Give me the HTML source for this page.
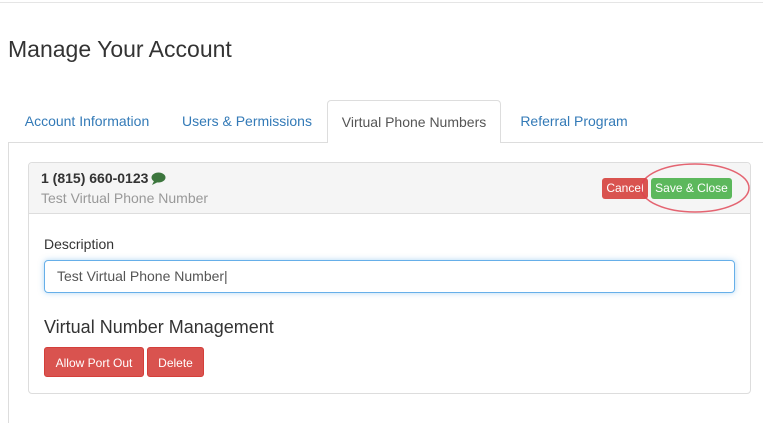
<!DOCTYPE html>
<html><head><style>
body{margin:0;width:763px;height:423px;overflow:hidden;background:#fff;font-family:"Liberation Sans",sans-serif;position:relative}
.a{position:absolute}
.tab{position:absolute;top:100px;height:42px;line-height:42px;font-size:14px;color:#337ab7;text-align:center}
.btn{position:absolute;color:#fff;font-size:12px;text-align:center;border-radius:3px}
</style></head><body>
<div class="a" style="left:0;top:2px;width:763px;height:1px;background:#e5e5e5"></div>
<div class="a" style="left:8px;top:36px;font-size:23px;color:#333">Manage Your Account</div>
<div class="a" style="left:8px;top:142px;width:755px;height:1px;background:#ddd"></div>
<div class="a" style="left:8px;top:142px;width:1px;height:281px;background:#ddd"></div>
<div class="tab" style="left:12px;width:150px">Account Information</div>
<div class="tab" style="left:170px;width:154px">Users &amp; Permissions</div>
<div class="tab" style="left:327px;width:174px;top:100px;height:43px;background:#fff;border:1px solid #ddd;border-bottom:none;border-radius:4px 4px 0 0;color:#555;box-sizing:border-box">Virtual Phone Numbers</div>
<div class="tab" style="left:506px;width:136px">Referral Program</div>
<div class="a" style="left:28px;top:162px;width:721px;height:230px;border:1px solid #ddd;border-radius:4px"></div>
<div class="a" style="left:29px;top:163px;width:721px;height:50px;background:#f5f5f5;border-bottom:1px solid #ddd;border-radius:4px 4px 0 0"></div>
<div class="a" style="left:41px;top:170px;font-size:14px;font-weight:bold;color:#333">1 (815) 660-0123</div>
<svg class="a" style="left:151px;top:172px" width="15" height="13" viewBox="0 0 15 13"><ellipse cx="7.5" cy="5.5" rx="7" ry="5" fill="#3c763d"/><path d="M3 9 L1 13 L7 10Z" fill="#3c763d"/></svg>
<div class="a" style="left:41px;top:190px;font-size:14px;color:#999">Test Virtual Phone Number</div>
<div class="btn" style="left:602px;top:178px;width:46px;height:21px;line-height:21px;background:#d9534f">Cancel</div>
<div class="btn" style="left:651px;top:178px;width:81px;height:21px;line-height:21px;background:#5cb85c">Save &amp; Close</div>
<svg class="a" style="left:638px;top:160px" width="115" height="56"><ellipse cx="57" cy="28" rx="54" ry="24" fill="none" stroke="#e04050" stroke-width="1.5" opacity=".8"/></svg>
<div class="a" style="left:44px;top:236px;font-size:14px;color:#333">Description</div>
<div class="a" style="left:44px;top:260px;width:691px;height:33px;border:1px solid #66afe9;border-radius:4px;box-sizing:border-box;box-shadow:0 0 6px rgba(102,175,233,.5);font-size:14px;color:#555;line-height:31px;padding-left:12px">Test Virtual Phone Number|</div>
<div class="a" style="left:44px;top:317px;font-size:18px;color:#333">Virtual Number Management</div>
<div class="btn" style="left:44px;top:347px;width:100px;height:30px;line-height:30px;background:#d9534f;border:1px solid #d43f3a;box-sizing:border-box">Allow Port Out</div>
<div class="btn" style="left:147px;top:347px;width:57px;height:30px;line-height:30px;background:#d9534f;border:1px solid #d43f3a;box-sizing:border-box">Delete</div>
</body></html>
